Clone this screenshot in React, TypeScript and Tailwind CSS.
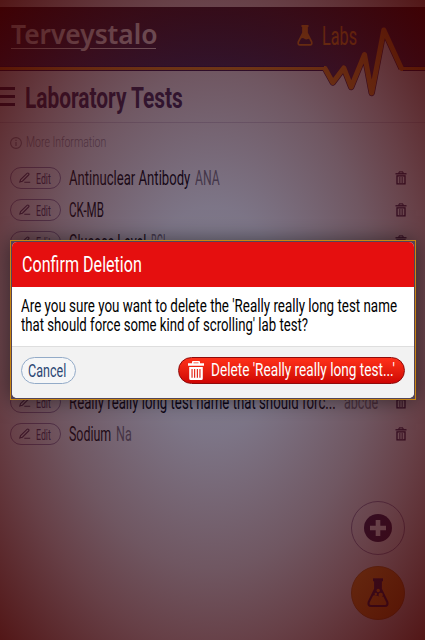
import { useLayoutEffect, useRef, type ReactNode } from 'react';

/* One line of text condensed horizontally to a given width. */
function Narrow({ w, className = '', children }: { w: number; className?: string; children: ReactNode }) {
  const ref = useRef<HTMLSpanElement>(null);
  useLayoutEffect(() => {
    const el = ref.current;
    if (el) el.style.transform = `scaleX(${w / el.offsetWidth})`;
  }, [w]);
  return (
    <span className="block shrink-0" style={{ width: w }}>
      <span ref={ref} className={`block w-max origin-left leading-none whitespace-nowrap ${className}`}>
        {children}
      </span>
    </span>
  );
}

function Trash({ className = '' }: { className?: string }) {
  return (
    <svg viewBox="0 0 12 14" className={className} fill="none" stroke="currentColor">
      <path d="M0.500 2.800H11.500" strokeWidth="1.300" />
      <path d="M4 2.500V0.900H8V2.500" strokeWidth="1" />
      <path d="M2 4.900H10V12.900H2Z" strokeWidth="1.300" />
      <path d="M4.500 6V12M6 6V12M7.500 6V12" strokeWidth="0.600" />
    </svg>
  );
}

function SolidTrash({ className = '' }: { className?: string }) {
  return (
    <svg viewBox="0 0 16 19" className={className} fill="currentColor">
      <path
        fillRule="evenodd"
        d="M5 0H11Q12 0 12 1V2.2H16V4.8H0V2.2H4V1Q4 0 5 0ZM5.5 1.4V2.2H10.5V1.4ZM1.2 6H14.8V17.5Q14.8 19 13.3 19H2.7Q1.2 19 1.2 17.5ZM3.5 8V16.7H4.6V8ZM6.1 8V16.7H7.2V8ZM8.8 8V16.7H9.9V8ZM11.4 8V16.7H12.5V8Z"
      />
    </svg>
  );
}

function Pencil() {
  return (
    <svg viewBox="0 0 12 12" className="h-3 w-3 shrink-0" fill="none" stroke="currentColor" strokeWidth="1.1">
      <path d="M.8 10L1.6 7.6L8 1.4Q8.800.7 9.6 1.4Q10.4 2.2 9.6 3L3.4 9.2L.8 10ZM5.300 10.200H11.2" />
    </svg>
  );
}

interface Test {
  name: string;
  nameW: number;
  abbr?: string;
  abbrW?: number;
  push?: boolean;
}

const firstTests: Test[] = [
  { name: 'Antinuclear Antibody', nameW: 121, abbr: 'ANA', abbrW: 25 },
  { name: 'CK-MB', nameW: 35 },
  { name: 'Glucose Level', nameW: 77, abbr: 'BGL', abbrW: 17 },
];

const lastTests: Test[] = [
  { name: 'Really really long test name that should forc...', nameW: 267, abbr: 'abcde', abbrW: 34, push: true },
  { name: 'Sodium', nameW: 42, abbr: 'Na', abbrW: 16 },
];

function Row({ t }: { t: Test }) {
  return (
    <li className="flex h-8 items-center pr-[18px] pl-[10px]">
      <button className="flex h-[22px] w-[51px] shrink-0 items-center rounded-full border border-[#8b7ba8] pl-2 text-[#45365f]">
        <Pencil />
        <span className="ml-[5px] block pt-0.5">
          <Narrow w={15} className="text-[14px]">Edit</Narrow>
        </span>
      </button>
      <div className="ml-2 flex grow pt-px text-[19.5px]">
        <Narrow w={t.nameW} className="text-black">{t.name}</Narrow>
        {t.abbr && (
          <div className={t.push ? 'ml-2' : 'ml-[5px]'}>
            <Narrow w={t.abbrW ?? 20} className="text-[#77737b]">{t.abbr}</Narrow>
          </div>
        )}
      </div>
      <Trash className="mb-px h-[14px] w-3 text-[#1b0636]" />
    </li>
  );
}

const pulse = 'L332.8 82.5L343.8 68L351.2 87L364.5 54.5L371.7 93L383.8 30L401.5 68.5';

export default function App() {
  return (
    <div className="relative h-[640px] w-[425px] overflow-hidden bg-[#f8f8fb] font-[Roboto,sans-serif]">
      <header className="relative flex h-[71px] items-start">
        <svg viewBox="0 0 425 100" className="absolute top-0 left-0 h-[100px] w-[425px]" fill="none">
          <defs>
            <linearGradient id="bar" x1="0" y1="0" x2="0" y2="1">
              <stop offset="0" stopColor="#1c0a22" />
              <stop offset="1" stopColor="#2c1e58" />
            </linearGradient>
          </defs>
          <path d={`M0 7H425V68.5H401.5L383.8 30L371.7 93L364.5 54.5L351.2 87L343.8 68L332.8 82.5L325 68.5H0Z`} fill="url(#bar)" />
          <path d="M0 68.5H325M401 68.5H425" stroke="#180040" strokeWidth="5" />
          <path d={`M325 68.5${pulse}`} stroke="#35103a" strokeWidth="6.4" strokeLinejoin="round" />
          <path d="M0 68.5H325M401 68.5H425" stroke="#f08a00" strokeWidth="3" />
          <path d={`M324 68.5H325${pulse}H403`} stroke="#f08a00" strokeWidth="5" strokeLinejoin="round" />
        </svg>
        <div className="relative ml-[11px] pt-[21px] text-white">
          <Narrow w={146} className="font-['Noto_Sans'] text-[26.5px] font-semibold">Terveystalo</Narrow>
          <div className="flex justify-between pr-px">
            <span className="h-px w-[70px] bg-white" />
            <span className="h-px w-[66px] bg-white" />
          </div>
        </div>
        <div className="relative ml-[140px] flex items-center pt-[21px] text-[#f08a00]">
          <svg viewBox="0 0 16 21" className="h-[21px] w-4 shrink-0" fill="none" stroke="currentColor">
            <path d="M4.5 1H11.5" strokeWidth="2" />
            <path d="M6 2V8L1.4 16.8Q.6 19.8 3 19.8H13Q15.4 19.8 14.6 16.8L10 8V2" strokeWidth="1.7" />
            <path d="M6 2H10V8L13 13.5L9 14.5L6 13L3.5 13.5L6 8Z" fill="currentColor" stroke="none" />
          </svg>
          <span className="ml-[9px] pt-[3px]">
            <Narrow w={35} className="text-[25px]">Labs</Narrow>
          </span>
        </div>
      </header>

      <div className="flex h-[52px] items-center border-b border-[#d3ccdc] text-[#2c1a4c]">
        <div className="flex w-[15px] flex-col gap-[5px]">
          <span className="h-[3px] bg-[#21103f]" />
          <span className="h-[3px] bg-[#21103f]" />
          <span className="h-[3px] bg-[#21103f]" />
        </div>
        <h1 className="ml-[10px] pt-[2px]">
          <Narrow w={158} className="text-[30px] font-bold">Laboratory Tests</Narrow>
        </h1>
      </div>

      <div className="flex h-[39px] items-center pl-[10px] text-[#8a8494]">
        <svg viewBox="0 0 12 12" className="h-3 w-3 shrink-0" fill="none" stroke="currentColor">
          <circle cx="6" cy="6" r="5.4" strokeWidth="1.1" />
          <path d="M6 5V9M6 2.8V4" strokeWidth="1.2" />
        </svg>
        <span className="ml-1">
          <Narrow w={80} className="text-[15.5px] font-light">More Information</Narrow>
        </span>
      </div>

      <ul>
        {firstTests.map((t) => (
          <Row key={t.name} t={t} />
        ))}
      </ul>
      <ul className="pt-32">
        {lastTests.map((t) => (
          <Row key={t.name} t={t} />
        ))}
      </ul>

      <div className="absolute right-[20px] bottom-[20px] flex flex-col gap-[11px]">
        <button className="flex size-[54px] items-center justify-center rounded-full border border-[#8b7ba8]">
          <svg viewBox="0 0 28 28" className="size-7">
            <circle cx="14" cy="14" r="14" fill="#210a40" />
            <path d="M14 6V22M6 14H22" stroke="#f4f2f8" strokeWidth="4.6" />
          </svg>
        </button>
        <button className="flex size-[54px] items-center justify-center rounded-full border border-[#c07000] bg-[#f08a00]">
          <svg viewBox="0 0 22 30" className="h-[30px] w-[22px]" fill="none" stroke="#210a40">
            <path d="M6 1.8H16" strokeWidth="3" />
            <path d="M8.2 3V11L1.7 24Q.8 28 4 28H18Q21.2 28 20.3 24L13.8 11V3" strokeWidth="2.2" />
            <path d="M8 3H14V11L17.5 18Q14 20 11 18Q7.500 16.500 5 18L8 11Z" fill="#210a40" stroke="none" />
            <circle cx="11.2" cy="12.5" r="1.700" fill="#f08a00" stroke="none" />
            <circle cx="13.7" cy="17" r="2.200" fill="#f08a00" stroke="none" />
            <circle cx="8.8" cy="16" r="1.200" fill="#f08a00" stroke="none" />
          </svg>
        </button>
      </div>

      <div className="absolute inset-0 bg-[radial-gradient(ellipse_farthest-corner_at_center,rgba(14,12,44,0.5)_0%,rgba(24,10,40,0.55)_25%,rgba(54,18,32,0.7)_55%,rgba(62,12,20,0.78)_72%,rgba(66,0,0,0.91)_100%)]" />

      <section className="absolute top-[240px] left-[10px] h-[160px] w-[406px] border border-[#c98611] bg-[#534457] p-px shadow-[0_0_20px_rgba(0,0,0,0.5)]">
        <div className="flex h-full flex-col overflow-hidden rounded-[5px] bg-white">
          <div className="flex h-[45px] shrink-0 items-center bg-[#e50f0f] pl-[10px] text-white">
            <Narrow w={120} className="text-[22px]">Confirm Deletion</Narrow>
          </div>
          <div className="flex h-[59px] shrink-0 flex-col pt-[10px] pl-[9px] text-[18.5px] text-black">
            <Narrow w={376} className="h-[19px]">Are you sure you want to delete the 'Really really long test name</Narrow>
            <Narrow w={287} className="h-[19px]">that should force some kind of scrolling' lab test?</Narrow>
          </div>
          <div className="flex grow items-center justify-between border-t border-[#dedede] bg-[#f2f2f2] pr-[9px] pb-[4px] pl-[9px]">
            <button className="flex h-[27px] w-[55px] items-center rounded-full border border-[#93abc8] bg-[#f5f6f7] pl-[6px] text-[#2c4774]">
              <Narrow w={38} className="pt-px text-[18.5px]">Cancel</Narrow>
            </button>
            <button className="flex h-[27px] w-[227px] items-center rounded-full border border-[#8e0b0b] bg-linear-to-b from-[#ff3019] to-[#cf0404] pl-[9px] text-white">
              <SolidTrash className="h-[19px] w-4 shrink-0" />
              <span className="ml-[7px]">
                <Narrow w={184} className="text-[18.5px]">Delete 'Really really long test...'</Narrow>
              </span>
            </button>
          </div>
        </div>
      </section>
    </div>
  );
}
